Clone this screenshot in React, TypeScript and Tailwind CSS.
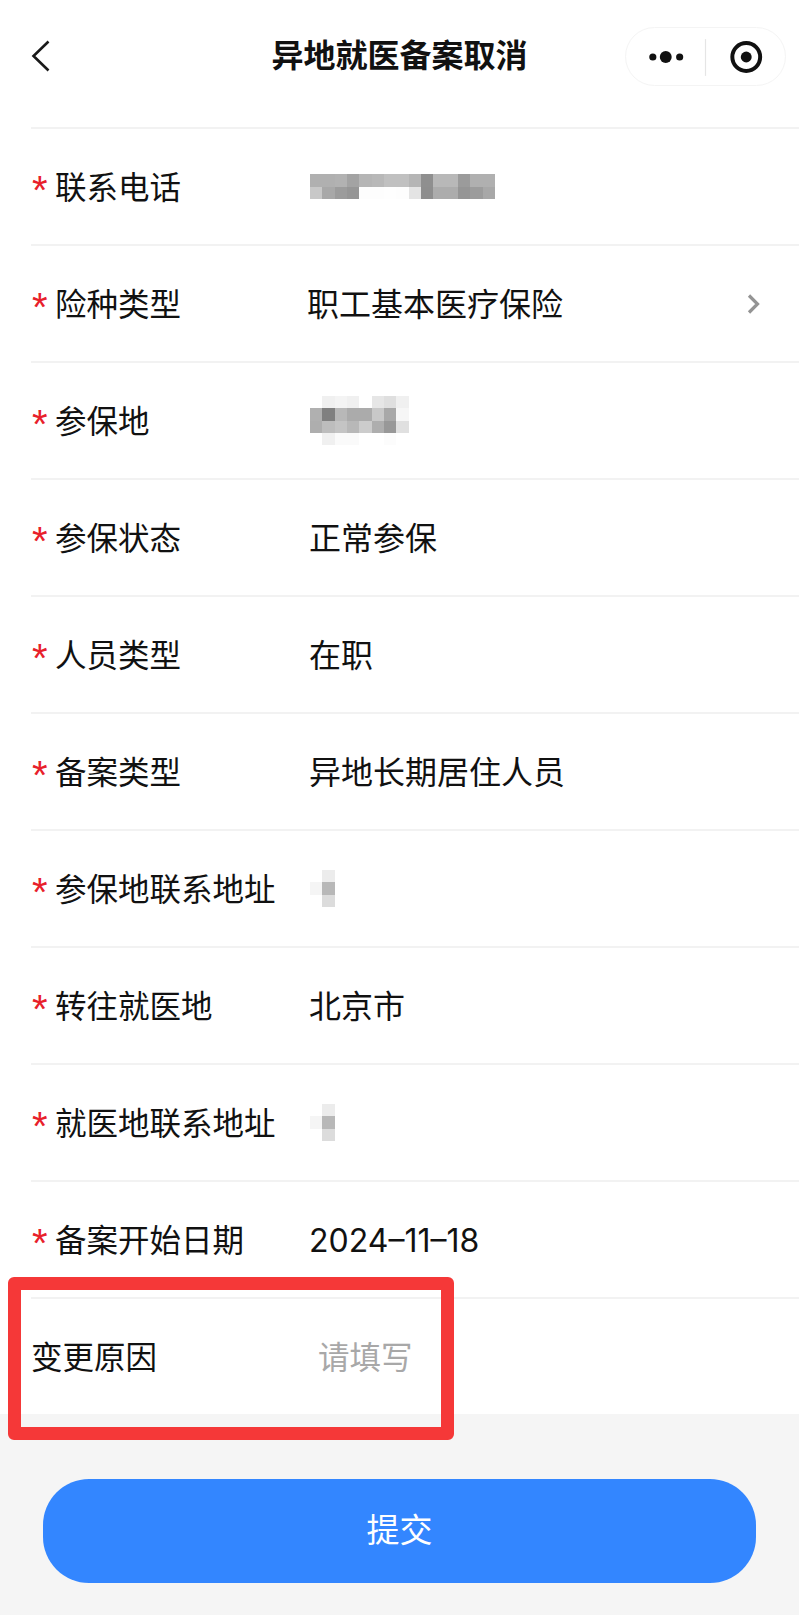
import React from "react";

const CJK = "font-['Inter','Noto_Sans_CJK_SC',sans-serif]";

// Gray levels for the privacy mosaics, one array per row of 12.3px cells.
const phoneMosaic = [
  ["#b0b0b0", "#b0b0b0", "#b2b2b2", "#a3a3a3", "#b5b5b5", "#b8b8b8", "#c0c0c0", "#c0c0c0", "#b5b5b5", "#8f8f8f", "#b8b8b8", "#b8b8b8", "#9b9b9b", "#b0b0b0", "#b0b0b0"],
  ["#c8c8c8", "#a8a8a8", "#9c9c9c", "#969696", "#fdfdfd", "#fdfdfd", "#fefefe", "#fdfdfd", "#e4e4e4", "#8e8e8e", "#acacac", "#acacac", "#959595", "#9c9c9c", "#a8a8a8"],
];

const placeMosaic = [
  ["#ffffff", "#f0f0f0", "#f4f4f4", "#f0f0f0", "#ffffff", "#e6e6e6", "#dfdfdf", "#f0f0f0"],
  ["#b0b0b0", "#808080", "#b8b8b8", "#ababab", "#ababab", "#c8c8c8", "#a8a8a8", "#f6f6f6"],
  ["#aeaeae", "#bdbdbd", "#c4c4c4", "#b8b8b8", "#cccccc", "#aeaeae", "#989898", "#e0e0e0"],
  ["#ffffff", "#f0f0f0", "#fafafa", "#fafafa", "#ffffff", "#ffffff", "#fcfcfc", "#ffffff"],
];

const addressMosaic = [
  ["#ffffff", "#ececec"],
  ["#f5f5f5", "#b8b8b8"],
  ["#ffffff", "#dcdcdc"],
];

function Mosaic({ cells }: { cells: string[][] }) {
  return (
    <div className="ml-[1px] flex flex-col">
      {cells.map((row, r) => (
        <div key={r} className="flex">
          {row.map((c, i) => (
            <div key={i} className="h-[12.4px] w-[12.35px]" style={{ backgroundColor: c }} />
          ))}
        </div>
      ))}
    </div>
  );
}

function Row({
  label,
  value,
  mosaic,
  arrow,
  valueClass = "",
}: {
  label: string;
  value?: string;
  mosaic?: string[][];
  arrow?: boolean;
  valueClass?: string;
}) {
  return (
    <div className="relative ml-[31px] flex h-[117px] items-center border-b-2 border-[#f2f2f2]">
      <span className="w-[24px] pl-[1px] pt-[7px] text-[40px] leading-none text-[#e8202a] font-['Liberation_Sans',sans-serif]">*</span>
      <span className="w-[254px] pt-[2px] text-[31.5px] leading-none text-[#111111]">{label}</span>
      {mosaic ? (
        <Mosaic cells={mosaic} />
      ) : (
        <span className={`pt-[2px] text-[32px] leading-none text-[#111111] ${valueClass}`}>{value}</span>
      )}
      {arrow && (
        <svg className="absolute right-[37px] top-[47px]" width="16" height="22" viewBox="0 0 16 22" fill="none">
          <path d="M3 2.5L11.5 11 3 19.5" stroke="#949494" strokeWidth="3.2" />
        </svg>
      )}
    </div>
  );
}

export default function App() {
  return (
    <div className={`relative h-[1615px] w-[799px] overflow-hidden bg-[#f5f5f5] ${CJK}`}>
      <div className="bg-white">
        <header className="relative flex h-[127px] items-start justify-center pt-[33px]">
          <svg className="absolute left-[30px] top-[39px]" width="22" height="34" viewBox="0 0 22 34" fill="none">
            <path d="M18.5 2.5L3.5 17l15 14.5" stroke="#1a1a1a" strokeWidth="2.6" />
          </svg>
          <h1 className="text-[32px] font-bold leading-[46px] text-[#111111]">异地就医备案取消</h1>
          <div className="absolute left-[625px] top-[27px] flex h-[59px] w-[161px] items-center rounded-full border border-[#f4f4f4]">
            <svg width="160" height="58" viewBox="0 0 160 58" fill="none">
              <circle cx="27" cy="29" r="3.6" fill="#111111" />
              <circle cx="40" cy="29" r="6" fill="#111111" />
              <circle cx="54" cy="29" r="3.6" fill="#111111" />
              <path d="M80 11v37" stroke="#e5e5e5" strokeWidth="1.2" />
              <circle cx="121" cy="29" r="14" stroke="#111111" strokeWidth="4" />
              <circle cx="121" cy="29" r="5.5" fill="#111111" />
            </svg>
          </div>
        </header>
        <div className="ml-[31px] h-[2px] bg-[#f2f2f2]" />

        <Row label="联系电话" mosaic={phoneMosaic} />
        <Row label="险种类型" value="职工基本医疗保险" arrow valueClass="ml-[-2px]" />
        <Row label="参保地" mosaic={placeMosaic} />
        <Row label="参保状态" value="正常参保" />
        <Row label="人员类型" value="在职" />
        <Row label="备案类型" value="异地长期居住人员" />
        <Row label="参保地联系地址" mosaic={addressMosaic} />
        <Row label="转往就医地" value="北京市" />
        <Row label="就医地联系地址" mosaic={addressMosaic} />
        <Row label="备案开始日期" value="2024–11–18" />

        <div className="flex h-[115px] items-center pl-[31px]">
          <span className="w-[287px] pt-[2px] text-[31.5px] leading-none text-[#111111]">变更原因</span>
          <span className="pt-[2px] text-[31.5px] leading-none text-[#a8a8a8]">请填写</span>
        </div>
      </div>

      <div className="px-[43px] pt-[65px]">
        <button className="flex h-[104px] w-full items-center justify-center rounded-[46px] bg-[#3386ff] text-[33px] text-white">
          提交
        </button>
      </div>

      {/* Red highlight drawn over the reason row */}
      <div className="absolute left-[8px] top-[1277px] h-[163px] w-[446px] rounded-[6px] border-[13px] border-[#f53838]" />
    </div>
  );
}
